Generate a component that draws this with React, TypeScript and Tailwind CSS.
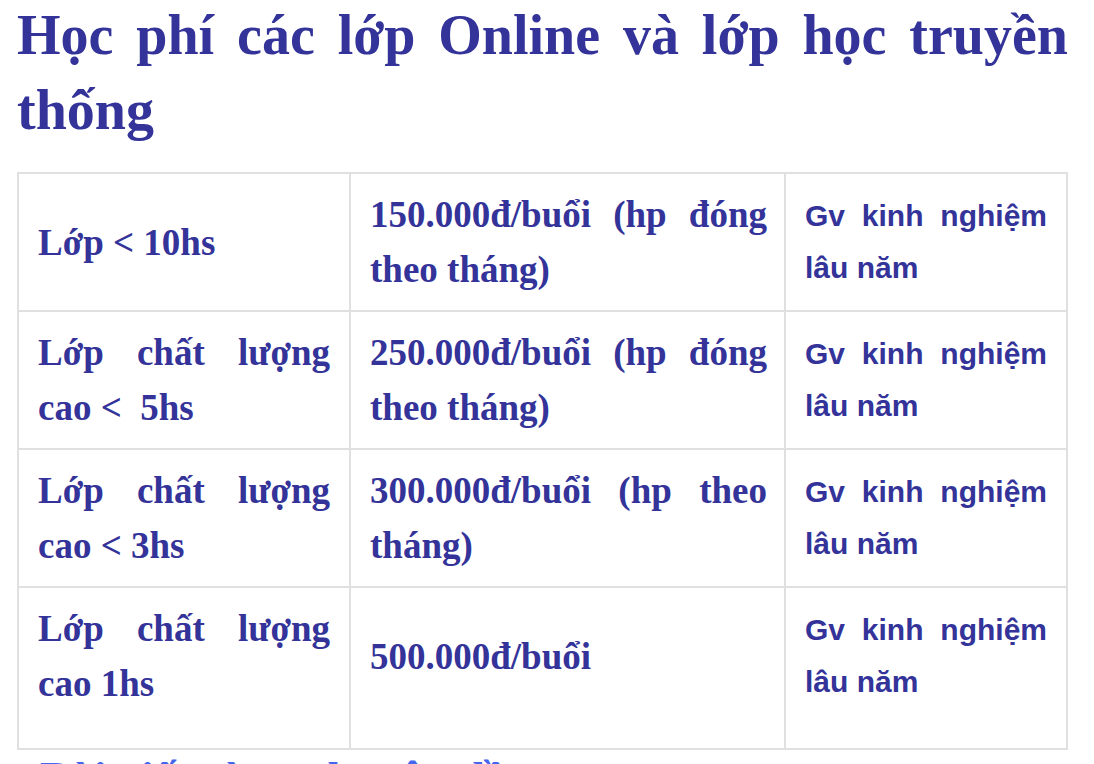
const rows = [
  { name: "Lớp < 10hs", fee: "150.000đ/buổi (hp đóng theo tháng)" },
  { name: "Lớp chất lượng cao < \u00a05hs", fee: "250.000đ/buổi (hp đóng theo tháng)" },
  { name: "Lớp chất lượng cao < 3hs", fee: "300.000đ/buổi (hp theo tháng)" },
  { name: "Lớp chất lượng cao 1hs", fee: "500.000đ/buổi", last: true },
];

export default function App() {
  return (
    <div className="h-[764px] overflow-hidden bg-white pl-[17px] pr-[26px] font-['Liberation_Serif',serif] text-[#333399]">
      <h1 className="-mt-[2px] text-justify text-[56px] font-bold leading-[75px]">
        Học phí các lớp Online và lớp học truyền thống
      </h1>
      <table className="mt-[24px] w-full table-fixed border-collapse">
        <colgroup>
          <col className="w-[332px]" />
          <col className="w-[435px]" />
          <col />
        </colgroup>
        <tbody>
          {rows.map((r) => (
            <tr key={r.name}>
              <td
                className={`border-2 border-[#e0e0e0] px-[19px] text-justify align-middle text-[37px] font-bold leading-[55px] ${
                  r.last ? "pt-[13px] pb-[37px]" : "py-[13px]"
                }`}
              >
                {r.name}
              </td>
              <td
                className={`border-2 border-[#e0e0e0] pl-[19px] pr-[17px] text-justify align-middle text-[37px] font-bold leading-[55px] ${
                  r.last ? "pt-[13px] pb-[37px]" : "py-[13px]"
                }`}
              >
                {r.fee}
              </td>
              <td
                className={`border-2 border-[#e0e0e0] px-[19px] text-justify align-middle font-['Liberation_Sans',sans-serif] text-[30px] font-bold leading-[52px] ${
                  r.last ? "pt-[13px] pb-[37px]" : "py-[13px]"
                }`}
              >
                Gv kinh nghiệm lâu năm
              </td>
            </tr>
          ))}
        </tbody>
      </table>
      <h2 className="mt-[6px] pl-[23px] text-[46px] font-bold leading-[46px] text-[#4466ee]">
        Bài viết cùng chuyên đề
      </h2>
    </div>
  );
}
